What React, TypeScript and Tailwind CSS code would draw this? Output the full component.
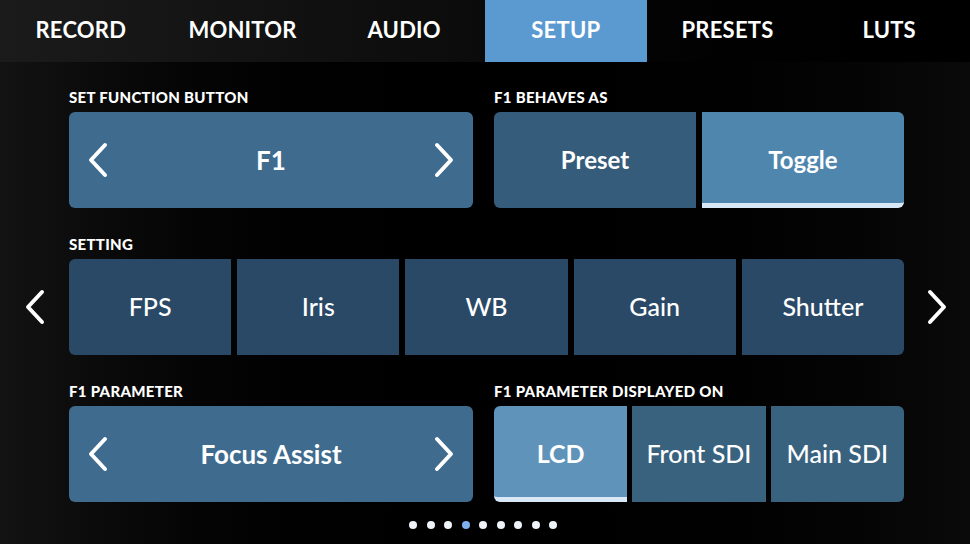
import React from 'react';

const tabs = ['RECORD', 'MONITOR', 'AUDIO', 'SETUP', 'PRESETS', 'LUTS'];
const settings = ['FPS', 'Iris', 'WB', 'Gain', 'Shutter'];

function Chevron({ dir, className }: { dir: 'left' | 'right'; className?: string }) {
  return (
    <svg width="22" height="36" viewBox="0 0 22 36" className={className}>
      <polyline
        points={dir === 'left' ? '18,3 4,18 18,33' : '4,3 18,18 4,33'}
        fill="none"
        stroke="white"
        strokeWidth="4"
        strokeLinecap="round"
        strokeLinejoin="round"
      />
    </svg>
  );
}

function Label({ children }: { children: React.ReactNode }) {
  return (
    <div className="h-[16px] mb-[7px] text-[15px] leading-[16px] font-black tracking-[0.02em] text-white">
      {children}
    </div>
  );
}

function Stepper({ value }: { value: string }) {
  return (
    <div className="h-[96px] rounded-[6px] bg-[#3e6b8e] flex items-center justify-between px-[18px]">
      <Chevron dir="left" />
      <span className="text-[26px] font-bold text-white">{value}</span>
      <Chevron dir="right" />
    </div>
  );
}

export default function App() {
  return (
    <div
      className="w-[970px] h-[544px] bg-black text-white overflow-hidden flex flex-col"
      style={{ fontFamily: 'Lato, "Open Sans", sans-serif' }}
    >
      {/* tab bar */}
      <div className="h-[62px] grid grid-cols-6 bg-gradient-to-r from-[#1b1b1b] via-[#0b0b0b] to-black">
        {tabs.map((t) => (
          <div
            key={t}
            className={
              'flex items-center justify-center pb-[3px] text-[22px] font-bold tracking-[0.01em] ' +
              (t === 'SETUP' ? 'bg-[#5b9ad0]' : '')
            }
          >
            {t}
          </div>
        ))}
      </div>

      <div className="flex-1 bg-gradient-to-r from-[#131313] via-black to-[#0a0a0a] pt-[27px]">
        {/* row 1 */}
        <div className="pl-[69px] grid grid-cols-[404px_410px] gap-x-[21px]">
          <div>
            <Label>SET FUNCTION BUTTON</Label>
            <Stepper value="F1" />
          </div>
          <div>
            <Label>F1 BEHAVES AS</Label>
            <div className="h-[96px] flex gap-[6px]">
              <div className="flex-1 rounded-l-[6px] bg-[#365c7b] flex items-center justify-center text-[24px] font-bold">
                Preset
              </div>
              <div className="flex-1 rounded-r-[6px] bg-[#4f86ae] border-b-[5px] border-[#d9e8f6] flex items-center justify-center text-[24px] font-bold pt-[5px]">
                Toggle
              </div>
            </div>
          </div>
        </div>

        {/* row 2 */}
        <div className="mt-[28px]">
          <div className="pl-[69px]">
            <Label>SETTING</Label>
          </div>
          <div className="flex h-[96px]">
            <div className="w-[69px] flex items-center justify-center">
              <Chevron dir="left" />
            </div>
            <div className="w-[835px] grid grid-cols-5 gap-[6px]">
              {settings.map((s, i) => (
                <div
                  key={s}
                  className={
                    'bg-[#2a4966] flex items-center justify-center text-[25px] font-medium ' +
                    (i === 0 ? 'rounded-l-[6px]' : i === settings.length - 1 ? 'rounded-r-[6px]' : '')
                  }
                >
                  {s}
                </div>
              ))}
            </div>
            <div className="flex-1 flex items-center justify-center">
              <Chevron dir="right" />
            </div>
          </div>
        </div>

        {/* row 3 */}
        <div className="mt-[28px] pl-[69px] grid grid-cols-[404px_410px] gap-x-[21px]">
          <div>
            <Label>F1 PARAMETER</Label>
            <Stepper value="Focus Assist" />
          </div>
          <div>
            <Label>F1 PARAMETER DISPLAYED ON</Label>
            <div className="h-[96px] grid grid-cols-3 gap-[5px]">
              <div className="rounded-l-[6px] bg-[#5f93ba] border-b-[5px] border-[#d9e8f6] flex items-center justify-center text-[25px] font-bold pt-[5px]">
                LCD
              </div>
              <div className="bg-[#39627f] flex items-center justify-center text-[25px] font-medium">
                Front SDI
              </div>
              <div className="rounded-r-[6px] bg-[#39627f] flex items-center justify-center text-[25px] font-medium">
                Main SDI
              </div>
            </div>
          </div>
        </div>

        {/* page dots */}
        <div className="mt-[19px] flex justify-center gap-[9.5px] pr-[4px]">
          {Array.from({ length: 9 }).map((_, i) => (
            <div
              key={i}
              className={'w-[8px] h-[8px] rounded-full ' + (i === 3 ? 'bg-[#7fb0ee]' : 'bg-[#eef3fa]')}
            />
          ))}
        </div>
      </div>
    </div>
  );
}
